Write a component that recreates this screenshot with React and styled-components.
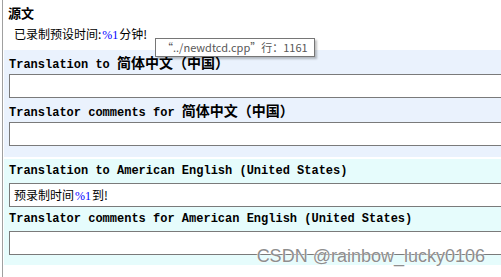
import React from 'react'
import styled, { createGlobalStyle } from 'styled-components'

const GlobalStyle = createGlobalStyle`
  html, body {
    margin: 0;
    padding: 0;
    background: #ffffff;
  }
`;

const Frame = styled.div`
  position: relative;
  width: 501px;
  height: 277px;
  overflow: hidden;
  background: #ffffff;
`;

const Pane = styled.div`
  margin-left: 2px;
  height: 100%;
  border-left: 1px solid #a0a0a0;
  display: flex;
  flex-direction: column;
`;

const SourceBlock = styled.div`
  height: 50px;
  padding: 5px 0 0 5px;
  box-sizing: border-box;
`;

const Heading = styled.div`
  font-family: "Noto Sans CJK SC", sans-serif;
  font-weight: 700;
  font-size: 13px;
  line-height: 16px;
  color: #000;
`;

const SourceText = styled.div`
  margin: 5px 0 0 6px;
  font-family: "Noto Sans CJK SC", sans-serif;
  font-size: 12px;
  line-height: 16px;
  color: #000;
`;

const Var = styled.span`
  font-family: "Liberation Serif", serif;
  font-size: 12px;
  color: #0000ff;
  margin: 0 1px;
`;

const Panel = styled.div`
  margin-left: 1px;
  margin-top: ${({ $gap }) => $gap || 0}px;
  padding: 0 0 ${({ $bottom }) => $bottom}px 5px;
  background: ${({ $tint }) => $tint};
  display: flex;
  flex-direction: column;
`;

const Label = styled.div`
  height: 24px;
  line-height: 24px;
  white-space: nowrap;
  font-family: "Liberation Mono", monospace;
  font-weight: 700;
  font-size: 12px;
  color: #000;
`;

const Cjk = styled.span`
  font-family: "Noto Sans CJK SC", sans-serif;
  font-size: 14px;
  font-weight: 700;
`;

const Field = styled.div`
  height: 24px;
  box-sizing: border-box;
  margin-right: -10px;
  border: 1px solid #7a7a7a;
  background: #ffffff;
  padding: 0 4px;
  font-family: "Noto Sans CJK SC", sans-serif;
  font-size: 12px;
  line-height: 22px;
  color: #000;
`;

const Tooltip = styled.div`
  position: absolute;
  left: 155px;
  top: 38px;
  height: 19px;
  padding: 0 6px;
  box-sizing: border-box;
  border: 1px solid #767676;
  background: #ffffff;
  box-shadow: 2px 2px 2px rgba(0, 0, 0, 0.25);
  font-family: "Noto Sans CJK SC", sans-serif;
  font-size: 11px;
  line-height: 17px;
  color: #575757;
  white-space: nowrap;
`;

const Watermark = styled.div`
  position: absolute;
  right: 16px;
  top: 246px;
  font-family: "Liberation Sans", Arial, sans-serif;
  font-size: 18px;
  line-height: 20px;
  color: #8e8e8e;
  text-shadow: 0 0 2px #ffffff, 0 0 1px #ffffff;
  white-space: nowrap;
`;

const App = () => {
  return (
    <Frame>
      <GlobalStyle />
      <Pane>
        <SourceBlock>
          <Heading>源文</Heading>
          <SourceText>已录制预设时间:<Var>%1</Var>分钟!</SourceText>
        </SourceBlock>
        <Panel $tint="#eaf2fd" $bottom={11}>
          <Label>Translation to <Cjk>简体中文（中国）</Cjk></Label>
          <Field />
          <Label>Translator comments for <Cjk>简体中文（中国）</Cjk></Label>
          <Field />
        </Panel>
        <Panel $tint="#e6fcfc" $bottom={10} $gap={2}>
          <Label>Translation to American English (United States)</Label>
          <Field>预录制时间<Var>%1</Var>到!</Field>
          <Label>Translator comments for American English (United States)</Label>
          <Field />
        </Panel>
      </Pane>
      <Tooltip>“../newdtcd.cpp”行：1161</Tooltip>
      <Watermark>CSDN @rainbow_lucky0106</Watermark>
    </Frame>
  )
}

export default App;
